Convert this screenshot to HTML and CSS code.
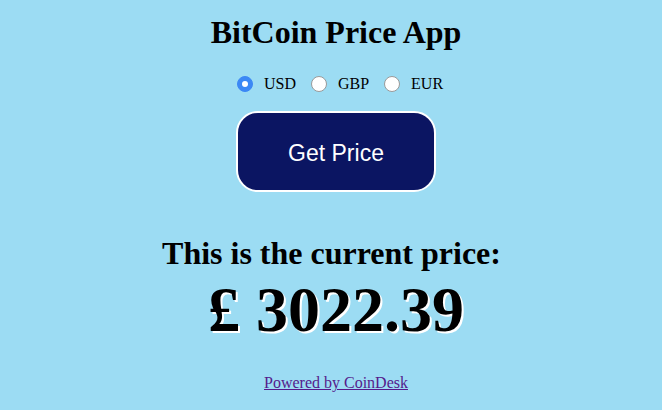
FILE: index.html
```html
<!DOCTYPE html>
<html>
<head>
<meta charset="utf-8">
<link rel="stylesheet" href="styles.css">
</head>
<body>
<div class="app">
  <h1 class="title">BitCoin Price App</h1>
  <div class="currencies">
    <label class="opt"><span class="radio checked"></span>USD</label>
    <label class="opt"><span class="radio"></span>GBP</label>
    <label class="opt"><span class="radio"></span>EUR</label>
  </div>
  <button class="get">Get Price</button>
  <h2 class="label">This is the current price:</h2>
  <div class="price">£ 3022.39</div>
  <a class="powered" href="#">Powered by CoinDesk</a>
</div>
</body>
</html>
```
FILE: styles.css
```css
html, body {
  margin: 0;
  padding: 0;
  background: #9cdcf3;
}
body {
  font-family: "Liberation Serif", "Times New Roman", serif;
  color: #000;
}
.app {
  display: flex;
  flex-direction: column;
  align-items: center;
  padding-top: 12px;
  padding-left: 10px;
}
.title {
  font-size: 32px;
  font-weight: bold;
  margin: 0;
  line-height: 40px;
}
.currencies {
  display: flex;
  gap: 15px;
  margin-top: 22px;
  padding-left: 8px;
  font-size: 16px;
  line-height: 20px;
}
.opt {
  display: flex;
  align-items: center;
  gap: 11px;
}
.radio {
  width: 14px;
  height: 14px;
  border: 1px solid #9a9a9a;
  border-radius: 50%;
  background: #fff;
  box-sizing: content-box;
  position: relative;
}
.radio.checked {
  background: #3b88f5;
  border-color: #3b88f5;
}
.radio.checked::after {
  content: "";
  position: absolute;
  left: 4px;
  top: 4px;
  width: 6px;
  height: 6px;
  border-radius: 50%;
  background: #fff;
}
.get {
  margin-top: 17px;
  width: 200px;
  height: 81px;
  padding-top: 4px;
  background: #0b1562;
  color: #fff;
  border: 2px solid #fff;
  border-radius: 22px;
  font-family: "Liberation Sans", Arial, sans-serif;
  font-size: 23px;
  cursor: pointer;
}
.label {
  font-size: 32px;
  font-weight: bold;
  margin: 42px 0 0 0;
  padding-right: 9px;
  line-height: 38px;
}
.price {
  font-size: 64px;
  font-weight: bold;
  line-height: 70px;
  margin-top: 3px;
  text-shadow: 2px 2px 0 #fff;
}
.powered {
  margin-top: 29px;
  font-size: 16px;
  color: #551a8b;
}
```
